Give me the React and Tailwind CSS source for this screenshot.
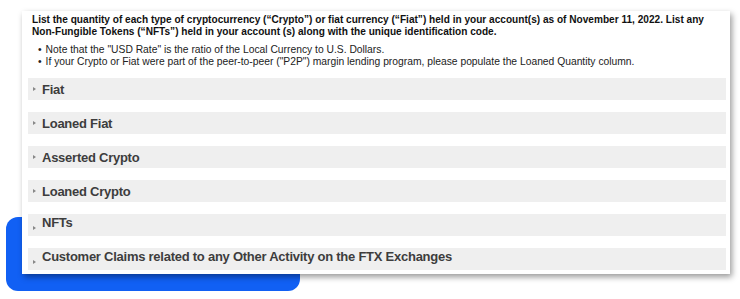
import React from "react";

const rows = [
  { label: "Fiat" },
  { label: "Loaned Fiat" },
  { label: "Asserted Crypto" },
  { label: "Loaned Crypto" },
  { label: "NFTs", low: true },
  { label: "Customer Claims related to any Other Activity on the FTX Exchanges", low: true },
];

function Row({ label, low }) {
  return (
    <div className="flex h-[22px] items-center bg-[#efefef] pl-[5px]">
      <span
        className={
          "mr-[6px] inline-block h-0 w-0 border-y-[2.5px] border-l-[3px] border-y-transparent border-l-[#888] " +
          (low ? "translate-y-[3px]" : "")
        }
      />
      <span
        className={
          "text-[13px] font-bold leading-none tracking-[-0.25px] text-[#3d3d3d] " +
          (low ? "-translate-y-[3px]" : "")
        }
      >
        {label}
      </span>
    </div>
  );
}

export default function App() {
  return (
    <div
      className="relative h-[299px] w-[740px] overflow-hidden bg-white"
      style={{ fontFamily: '"Liberation Sans", Arial, Helvetica, sans-serif' }}
    >
      <div className="absolute left-[6px] top-[217px] h-[74px] w-[294px] rounded-[12px] bg-[#1160f4]" />
      <div className="relative ml-[22px] mt-[11px] h-[263px] w-[708px] bg-white shadow-[2px_3px_6px_rgba(0,0,0,0.4)]">
        <div className="pl-[10px] pr-[8px] pt-[3px]">
          <p className="text-[10.1px] font-bold leading-[12px] text-[#111]">
            List the quantity of each type of cryptocurrency (“Crypto”) or fiat currency (“Fiat”) held in your account(s) as of November 11, 2022. List any Non-Fungible Tokens (“NFTs”) held in your account (s) along with the unique identification code.
          </p>
          <ul className="mt-[5.5px] pl-[6px] text-[10.3px] leading-[12.5px] text-[#222]">
            <li className="flex">
              <span className="mr-[4px]">•</span>
              <span>Note that the "USD Rate" is the ratio of the Local Currency to U.S. Dollars.</span>
            </li>
            <li className="flex">
              <span className="mr-[4px]">•</span>
              <span>If your Crypto or Fiat were part of the peer-to-peer ("P2P") margin lending program, please populate the Loaned Quantity column.</span>
            </li>
          </ul>
        </div>
        <div className="mt-[9.5px] flex flex-col gap-[12px] pl-[6px] pr-[4px]">
          {rows.map((r) => (
            <Row key={r.label} {...r} />
          ))}
        </div>
      </div>
    </div>
  );
}
